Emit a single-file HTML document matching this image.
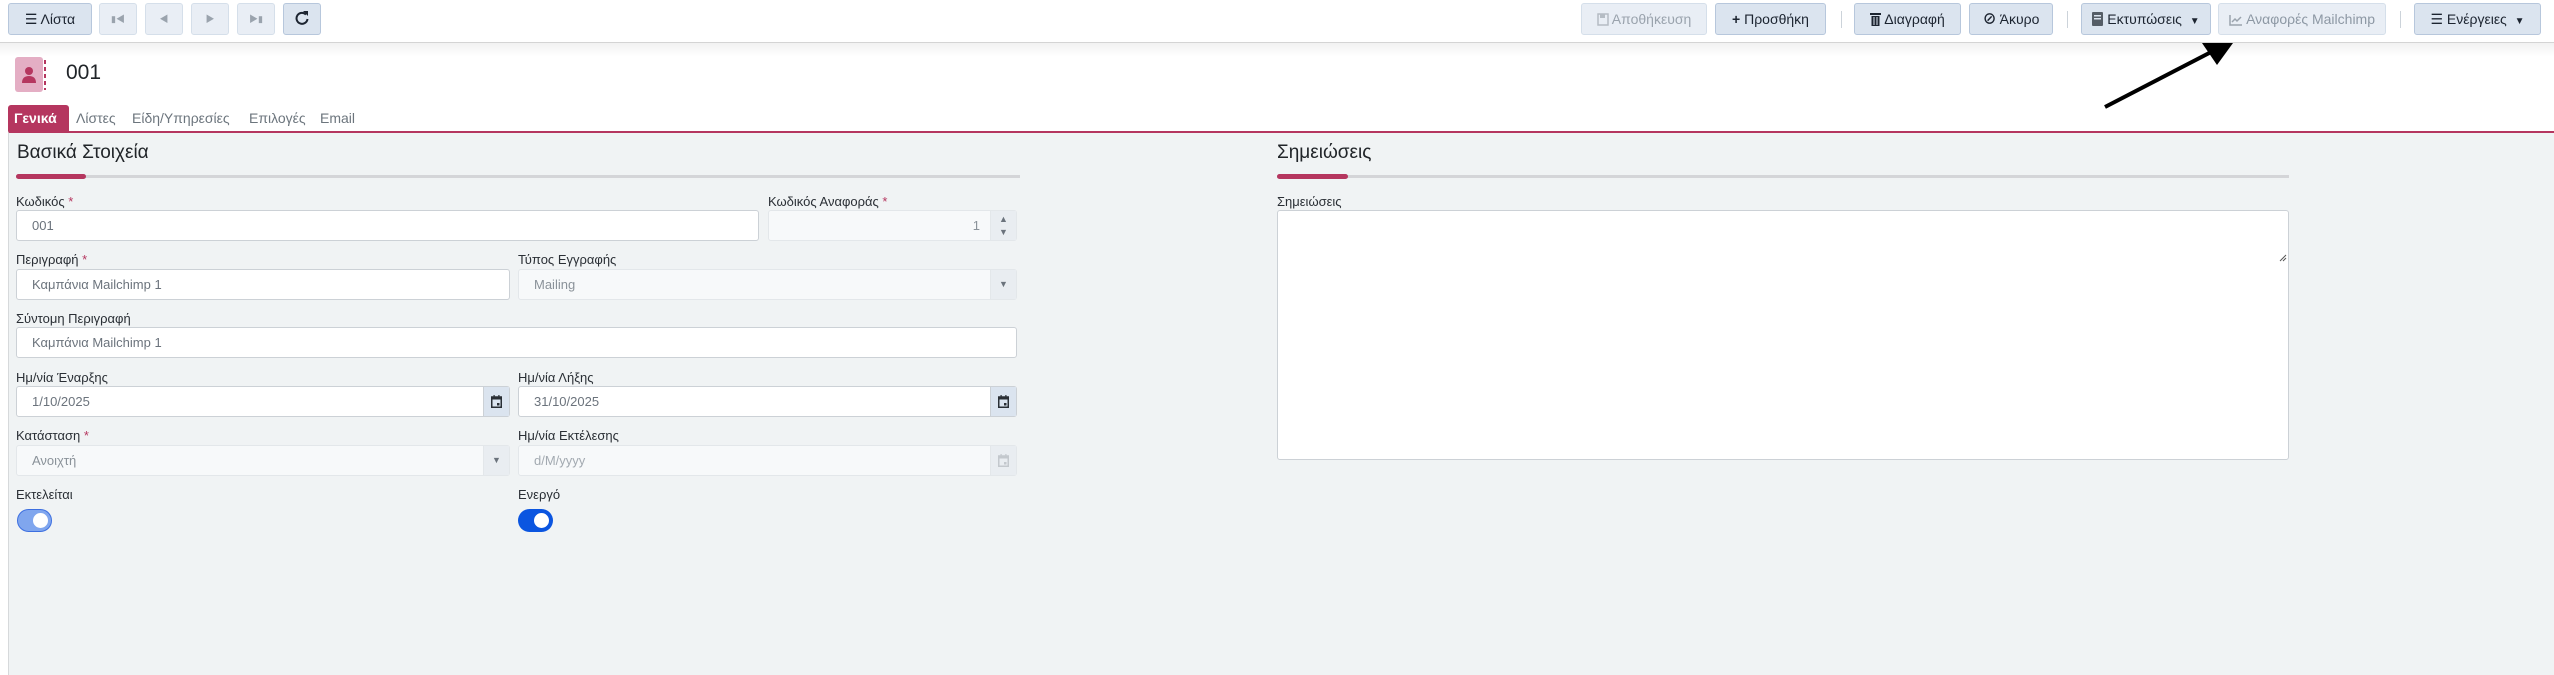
<!DOCTYPE html>
<html><head><meta charset="utf-8"><style>
*{box-sizing:border-box;margin:0;padding:0}
body{width:2554px;height:574px;overflow:hidden;background:#fff;font-family:"Liberation Sans","Noto Sans CJK SC",sans-serif;color:#212529;position:relative}
.a{position:absolute}
.btn{position:absolute;top:3px;height:32px;border:1px solid #b7c7dc;background:#dbe4ef;border-radius:3px;font-size:14px;line-height:30px;color:#1c2430;text-align:center;white-space:nowrap}
.btn svg{vertical-align:-2px}
.dis{background:#e9eef5;border-color:#d5dfea;color:#9aa3ad}
.sep{position:absolute;top:11px;width:1px;height:17px;background:#ccd3da}
.lbl{position:absolute;font-size:13px;color:#2a2f35}
.req{color:#b5365f}
.in{position:absolute;height:31px;border:1px solid #ccd1d6;border-radius:3px;background:#fff;font-size:13px;line-height:29px;padding-left:15px;color:#6b737c}
.ro{background:#f7f9fa;border-color:#e3e7ea;color:#8a9299}
.add{position:absolute;top:0;right:0;width:26px;height:29px;border-left:1px solid #ccd1d6;background:#dbe4ef;font-size:9px;line-height:29px;text-align:center;color:#6b737c}
.add svg{position:absolute;left:7px;top:8px}
.ro .add{background:#e9edf1;border-left-color:#e3e7ea}
.tab{position:absolute;top:105px;font-size:14px;line-height:26px;color:#6c757d}
</style></head><body>
<!-- toolbar -->
<div class="btn" style="left:8px;width:84px">&#9776; Λίστα</div>
<div class="btn dis" style="left:99px;width:38px;font-size:9px">&#9646;&#9664;</div>
<div class="btn dis" style="left:145px;width:38px;font-size:9px">&#9664;</div>
<div class="btn dis" style="left:191px;width:38px;font-size:9px">&#9654;</div>
<div class="btn dis" style="left:237px;width:38px;font-size:9px">&#9654;&#9646;</div>
<div class="btn" style="left:283px;width:38px"><svg width="14" height="16" viewBox="0 0 14 16"><path d="M11 4.5 A5.5 5.5 0 1 0 12.5 9" fill="none" stroke="#1c2430" stroke-width="2"/><polygon points="8,1 13,1 13,6" fill="#1c2430"/></svg></div>

<div class="btn dis" style="left:1581px;width:126px"><svg width="12" height="13"><rect x="1" y="1" width="10" height="11" fill="none" stroke="#b5bcc4" stroke-width="1.5"/><rect x="3" y="1" width="5" height="4" fill="#b5bcc4"/></svg> Αποθήκευση</div>
<div class="btn" style="left:1715px;width:111px"><b>+</b> Προσθήκη</div>
<div class="sep" style="left:1841px"></div>
<div class="btn" style="left:1854px;width:107px"><svg width="11" height="14"><rect x="0" y="1" width="11" height="2" fill="#1c2430"/><rect x="1.5" y="4" width="8" height="10" fill="#1c2430"/><rect x="3.5" y="5" width="1" height="8" fill="#dbe4ef"/><rect x="6.5" y="5" width="1" height="8" fill="#dbe4ef"/></svg> Διαγραφή</div>
<div class="btn" style="left:1969px;width:84px"><b>&#8856;</b> Άκυρο</div>
<div class="sep" style="left:2067px"></div>
<div class="btn" style="left:2081px;width:130px"><svg width="11" height="14"><rect x="0" y="0" width="11" height="14" rx="1" fill="#555d66"/><rect x="2" y="3" width="7" height="1.5" fill="#dbe4ef"/><rect x="2" y="6" width="7" height="1.5" fill="#dbe4ef"/></svg> Εκτυπώσεις &nbsp;<span style="font-size:10px">&#9660;</span></div>
<div class="btn dis" style="left:2218px;width:168px;color:#8d98a4"><svg width="14" height="12"><path d="M1 1 V11 H13" fill="none" stroke="#9aa3ad" stroke-width="1.5"/><path d="M3 8 L6 5 L8 7 L12 3" fill="none" stroke="#9aa3ad" stroke-width="1.5"/></svg> Αναφορές Mailchimp</div>
<div class="sep" style="left:2400px"></div>
<div class="btn" style="left:2414px;width:127px">&#9776; Ενέργειες &nbsp;<span style="font-size:10px">&#9660;</span></div>
<div class="a" style="left:0;top:42px;width:2554px;height:1px;background:#d4d4d4"></div>
<div class="a" style="left:0;top:43px;width:2554px;height:14px;background:linear-gradient(#f1f1f1,#fff)"></div>

<!-- arrow -->
<svg class="a" style="left:2090px;top:35px" width="160" height="85"><line x1="15" y1="72" x2="125" y2="15" stroke="#000" stroke-width="4"/><polygon points="143,8 112,8 127,30" fill="#000"/></svg>

<!-- header -->
<div class="a" style="left:15px;top:57px;width:28px;height:35px;background:#e4aec4;border-radius:3px"></div>
<svg class="a" style="left:15px;top:57px" width="36" height="35"><circle cx="14" cy="14" r="4" fill="#b5365f"/><path d="M7 26 q0-7 7-7 q7 0 7 7z" fill="#b5365f"/><line x1="30" y1="3" x2="30" y2="33" stroke="#b5365f" stroke-width="2" stroke-dasharray="4 3"/></svg>
<div class="a" style="left:66px;top:61px;font-size:21px">001</div>

<!-- tabs -->
<div class="a" style="left:8px;top:105px;width:61px;height:26px;background:#b5365f;border-radius:3px 3px 0 0"></div>
<div class="tab" style="left:14px;color:#fff;font-weight:bold">Γενικά</div>
<div class="tab" style="left:76px">Λίστες</div>
<div class="tab" style="left:132px">Είδη/Υπηρεσίες</div>
<div class="tab" style="left:249px">Επιλογές</div>
<div class="tab" style="left:320px">Email</div>
<div class="a" style="left:8px;top:131px;width:2546px;height:544px;background:#f0f3f4;border-left:1px solid #d6d9db;border-top:2px solid #b5365f"></div>

<!-- section titles -->
<div class="a" style="left:17px;top:142px;font-size:19px">Βασικά Στοιχεία</div>
<div class="a" style="left:16px;top:175px;width:1004px;height:3px;background:#d4d5d8"></div>
<div class="a" style="left:16px;top:174px;width:70px;height:5px;background:#b5365f;border-radius:3px"></div>
<div class="a" style="left:1277px;top:142px;font-size:19px">Σημειώσεις</div>
<div class="a" style="left:1277px;top:175px;width:1012px;height:3px;background:#d4d5d8"></div>
<div class="a" style="left:1277px;top:174px;width:71px;height:5px;background:#b5365f;border-radius:3px"></div>

<!-- fields -->
<div class="lbl" style="left:16px;top:194px">Κωδικός <span class="req">*</span></div>
<div class="in" style="left:16px;top:210px;width:743px">001</div>
<div class="lbl" style="left:768px;top:194px">Κωδικός Αναφοράς <span class="req">*</span></div>
<div class="in ro" style="left:768px;top:210px;width:249px;text-align:right;padding-right:36px">1<div class="add" style="line-height:13px;padding-top:2px">&#9650;<br>&#9660;</div></div>

<div class="lbl" style="left:16px;top:252px">Περιγραφή <span class="req">*</span></div>
<div class="in" style="left:16px;top:269px;width:494px">Καμπάνια Mailchimp 1</div>
<div class="lbl" style="left:518px;top:252px">Τύπος Εγγραφής</div>
<div class="in ro" style="left:518px;top:269px;width:499px">Mailing<div class="add">&#9660;</div></div>

<div class="lbl" style="left:16px;top:311px">Σύντομη Περιγραφή</div>
<div class="in" style="left:16px;top:327px;width:1001px">Καμπάνια Mailchimp 1</div>

<div class="lbl" style="left:16px;top:370px">Ημ/νία Έναρξης</div>
<div class="in" style="left:16px;top:386px;width:494px">1/10/2025<div class="add"><svg width="11" height="13"><rect x="0.75" y="2" width="9.5" height="10.25" fill="none" stroke="#2a2f35" stroke-width="1.5"/><rect x="0.75" y="2" width="9.5" height="2.5" fill="#2a2f35"/><rect x="2.5" y="0" width="1.2" height="3" fill="#2a2f35"/><rect x="7.3" y="0" width="1.2" height="3" fill="#2a2f35"/><rect x="6" y="8" width="2.5" height="2.5" fill="#2a2f35"/></svg></div></div>
<div class="lbl" style="left:518px;top:370px">Ημ/νία Λήξης</div>
<div class="in" style="left:518px;top:386px;width:499px">31/10/2025<div class="add"><svg width="11" height="13"><rect x="0.75" y="2" width="9.5" height="10.25" fill="none" stroke="#2a2f35" stroke-width="1.5"/><rect x="0.75" y="2" width="9.5" height="2.5" fill="#2a2f35"/><rect x="2.5" y="0" width="1.2" height="3" fill="#2a2f35"/><rect x="7.3" y="0" width="1.2" height="3" fill="#2a2f35"/><rect x="6" y="8" width="2.5" height="2.5" fill="#2a2f35"/></svg></div></div>

<div class="lbl" style="left:16px;top:428px">Κατάσταση <span class="req">*</span></div>
<div class="in ro" style="left:16px;top:445px;width:494px">Ανοιχτή<div class="add">&#9660;</div></div>
<div class="lbl" style="left:518px;top:428px">Ημ/νία Εκτέλεσης</div>
<div class="in ro" style="left:518px;top:445px;width:499px;color:#a3aab1">d/M/yyyy<div class="add"><svg width="11" height="13"><rect x="0.75" y="2" width="9.5" height="10.25" fill="none" stroke="#c3c8cd" stroke-width="1.5"/><rect x="0.75" y="2" width="9.5" height="2.5" fill="#c3c8cd"/><rect x="2.5" y="0" width="1.2" height="3" fill="#c3c8cd"/><rect x="7.3" y="0" width="1.2" height="3" fill="#c3c8cd"/><rect x="6" y="8" width="2.5" height="2.5" fill="#c3c8cd"/></svg></div></div>

<div class="lbl" style="left:16px;top:487px">Εκτελείται</div>
<div class="a" style="left:17px;top:509px;width:35px;height:23px;border-radius:12px;background:#80a6ee;border:1px solid #3d6fe0"><div class="a" style="right:3px;top:3px;width:15px;height:15px;border-radius:50%;background:#fff"></div></div>
<div class="lbl" style="left:518px;top:487px">Ενεργό</div>
<div class="a" style="left:518px;top:509px;width:35px;height:23px;border-radius:12px;background:#0b55e0"><div class="a" style="right:4px;top:4px;width:15px;height:15px;border-radius:50%;background:#fff"></div></div>

<!-- notes -->
<div class="lbl" style="left:1277px;top:194px">Σημειώσεις</div>
<div class="a" style="left:1277px;top:210px;width:1012px;height:250px;background:#fff;border:1px solid #ccd1d6;border-radius:3px"></div>
<svg class="a" style="left:2279px;top:254px" width="8" height="8"><line x1="1" y1="7" x2="7" y2="1" stroke="#555" stroke-width="1"/><line x1="4" y1="7" x2="7" y2="4" stroke="#555" stroke-width="1"/></svg>
</body></html>
